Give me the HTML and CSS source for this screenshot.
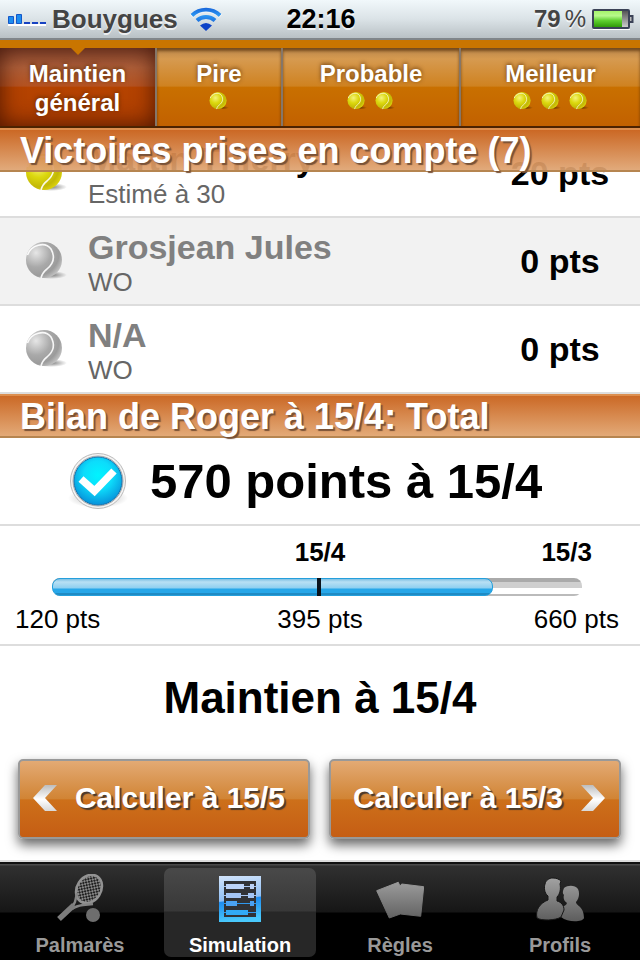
FILE: index.html
```html
<!DOCTYPE html>
<html lang="fr">
<head>
<meta charset="utf-8">
<meta name="viewport" content="width=device-width, initial-scale=1">
<title>Simulation</title>
<link rel="stylesheet" href="styles.css">
</head>
<body>
<svg class="defs" aria-hidden="true">
  <defs>
    <radialGradient id="yellow" cx="35%" cy="35%" r="75%"><stop offset="0" stop-color="#f4f27a"/><stop offset=".4" stop-color="#dcd80e"/><stop offset=".75" stop-color="#c3b806"/><stop offset="1" stop-color="#e2da10"/></radialGradient>
    <radialGradient id="silver" cx="28%" cy="30%" r="80%"><stop offset="0" stop-color="#e6e6e6"/><stop offset=".5" stop-color="#a9a9a9"/><stop offset=".8" stop-color="#9b9b9b"/><stop offset="1" stop-color="#c4c4c4"/></radialGradient>
    <radialGradient id="shade"><stop offset="0" stop-color="#000" stop-opacity=".5"/><stop offset="1" stop-color="#000" stop-opacity="0"/></radialGradient>
    <radialGradient id="cyan" cx="50%" cy="38%" r="60%"><stop offset="0" stop-color="#00f4ff"/><stop offset=".5" stop-color="#0ddcfb"/><stop offset="1" stop-color="#0796dc"/></radialGradient>
    <linearGradient id="icon" gradientUnits="userSpaceOnUse" x1="0" y1="4" x2="0" y2="46"><stop offset="0" stop-color="#a2a2a2"/><stop offset="1" stop-color="#5f5f5f"/></linearGradient>
    <linearGradient id="wifi" gradientUnits="userSpaceOnUse" x1="0" y1="0" x2="0" y2="24"><stop offset="0" stop-color="#1560d8"/><stop offset=".35" stop-color="#2b96f2"/><stop offset="1" stop-color="#0a3fc4"/></linearGradient>
    <linearGradient id="cell" x2="0" y2="1"><stop offset="0" stop-color="#a6f56a"/><stop offset=".3" stop-color="#b8f98c"/><stop offset=".6" stop-color="#5ecf2f"/><stop offset="1" stop-color="#2f9a08"/></linearGradient>
    <linearGradient id="empty" x2="0" y2="1"><stop offset="0" stop-color="#555"/><stop offset="1" stop-color="#ccc"/></linearGradient>
    <linearGradient id="chevron" x2="0" y2="1"><stop offset="0" stop-color="#bdbdbd"/><stop offset=".55" stop-color="#fff"/><stop offset="1" stop-color="#d8d8d8"/></linearGradient>
    <linearGradient id="frame" gradientUnits="userSpaceOnUse" x1="0" y1="0" x2="6" y2="46"><stop offset="0" stop-color="#d2e4fb"/><stop offset=".54" stop-color="#8fbff5"/><stop offset=".57" stop-color="#1f8df0"/><stop offset="1" stop-color="#49c8fb"/></linearGradient>
    <pattern id="mesh" width="4" height="4" patternUnits="userSpaceOnUse"><rect width="4" height="4" fill="#888"/><rect width="2" height="2" fill="#222"/><rect x="2" y="2" width="2" height="2" fill="#222"/></pattern>
    <symbol id="ball" viewBox="0 0 42 40">
      <ellipse cx="26" cy="34" rx="16" ry="4" fill="url(#shade)"/>
      <circle cx="19" cy="19" r="18"/>
      <path d="M2.500 14C6 4 20 0 26 8C31 17 28 23 22 28C18 31 17 33 16 37" fill="none" stroke="#fff" stroke-width="1.600" stroke-opacity=".9"/>
    </symbol>
  </defs>
</svg>

<header class="status">
  <div class="status-left">
    <svg width="38" height="14" viewBox="0 0 38 14" aria-hidden="true"><path d="M0 13h38" stroke="#fff" stroke-width="2"/><path d="M.5 4.500h5v7h-5zM8.500 2.500h5v9h-5z" fill="#1c8df0" stroke="#1556c8"/><path d="M16 11h6M24 11h6M32 11h6" stroke="#1743c2" stroke-width="2"/></svg>
    <span class="carrier">Bouygues</span>
    <svg class="wifi" width="32" height="25" viewBox="0 0 32 25" aria-hidden="true"><g fill="none" stroke="url(#wifi)" stroke-width="4"><path d="M2 8.500A20 20 0 0 1 30 8.500"/><path d="M7 13.500A13 13 0 0 1 25 13.500" /></g><path d="M10 18.500Q16 13.500 22 18.500L16 24z" fill="#0d43c8"/><path d="M0 7L3 10.500A18 18 0 0 1 29 10.500L32 7" fill="none" stroke="#fff" stroke-width=".6"/></svg>
  </div>
  <time class="clock">22:16</time>
  <div class="status-right">
    <span class="charge"><span>79</span><span class="percent">%</span></span>
    <svg width="42" height="21" viewBox="0 0 42 21" aria-hidden="true"><path d="M1 20.500h37" stroke="#fff"/><rect x="1" y="1" width="36" height="18" rx="1" fill="#fff" stroke="#3b4257" stroke-width="2"/><rect x="2" y="2" width="28" height="16" fill="url(#cell)"/><rect x="30" y="2" width="6" height="16" fill="url(#empty)"/><path d="M38 7h2.500v6H38" fill="#bbb" stroke="#3b4257" stroke-width="2"/></svg>
  </div>
</header>

<nav class="tabs" aria-label="Scénario">
  <button class="tab tab-active" type="button"><span>Maintien<br>général</span></button>
  <button class="tab" type="button">Pire<span class="balls"><svg class="ball-s"><use href="#ball"/></svg></span></button>
  <button class="tab" type="button">Probable<span class="balls"><svg class="ball-s"><use href="#ball"/></svg><svg class="ball-s"><use href="#ball"/></svg></span></button>
  <button class="tab" type="button">Meilleur<span class="balls"><svg class="ball-s"><use href="#ball"/></svg><svg class="ball-s"><use href="#ball"/></svg><svg class="ball-s"><use href="#ball"/></svg></span></button>
</nav>

<main>
  <section>
    <h2 class="heading heading-over">Victoires prises en compte (7)</h2>
    <ul class="wins">
      <li class="win">
        <svg class="ball"><use href="#ball"/></svg>
        <div class="player"><strong class="name">Martin Thierry</strong><span class="note">Estimé à 30</span></div>
        <b class="points">20 pts</b>
      </li>
      <li class="win win-alt win-wo">
        <svg class="ball"><use href="#ball"/></svg>
        <div class="player"><strong class="name">Grosjean Jules</strong><span class="note">WO</span></div>
        <b class="points">0 pts</b>
      </li>
      <li class="win win-wo">
        <svg class="ball"><use href="#ball"/></svg>
        <div class="player"><strong class="name">N/A</strong><span class="note">WO</span></div>
        <b class="points">0 pts</b>
      </li>
    </ul>
  </section>

  <section>
    <h2 class="heading">Bilan de Roger à 15/4: Total</h2>
    <p class="total">
      <svg width="60" height="58" viewBox="0 0 60 58" aria-hidden="true"><ellipse cx="30" cy="46" rx="30" ry="10" fill="url(#shade)" opacity=".6"/><circle cx="30" cy="29" r="27.500" fill="#f4f4f4" stroke="#bbb"/><circle cx="30" cy="29" r="25" fill="none" stroke="#aaa"/><circle cx="30" cy="29" r="24" fill="url(#cyan)" stroke="#1573ad"/><path d="M13 27L26.500 39L46 19" fill="none" stroke="#fff" stroke-width="7.500"/></svg>
      <span>570 points à 15/4</span>
    </p>
    <div class="scale">
      <div class="ranks"><span></span><b>15/4</b><b class="rank-next">15/3</b></div>
      <div class="track" role="meter" aria-label="Points" aria-valuemin="120" aria-valuemax="660" aria-valuenow="570"><div class="fill" style="width:83.3%"></div><i class="mark"></i></div>
      <div class="limits"><span>120 pts</span><span>395 pts</span><span>660 pts</span></div>
    </div>
    <p class="verdict">Maintien à 15/4</p>
    <div class="actions">
      <button class="action" type="button"><svg width="24" height="26" viewBox="0 0 24 26" aria-hidden="true"><path d="M0 13L12 0H24L12 13L24 26H12Z" fill="url(#chevron)"/></svg>Calculer à 15/5</button>
      <button class="action action-next" type="button">Calculer à 15/3<svg width="24" height="26" viewBox="0 0 24 26" aria-hidden="true"><path d="M24 13L12 0H0L12 13L0 26H12Z" fill="url(#chevron)"/></svg></button>
    </div>
  </section>
</main>

<nav class="bar" aria-label="Navigation">
  <a class="item" href="#palmares">
    <svg viewBox="0 0 48 48" aria-hidden="true"><g transform="rotate(33 33 15)"><ellipse cx="33" cy="15" rx="12" ry="15" fill="url(#mesh)" stroke="#929292" stroke-width="2.500"/></g><path d="M21 19L19 28Q18 31 15 33M37 30L27 31Q20 32 16 35" fill="none" stroke="#858585" stroke-width="2.400"/><path d="M3 45L18 31" stroke="#7d7d7d" stroke-width="5.500"/><circle cx="37" cy="41" r="7" fill="#6e6e6e"/></svg>
    <span>Palmarès</span>
  </a>
  <a class="item item-active" href="#simulation" aria-current="page">
    <svg viewBox="0 0 48 48" aria-hidden="true"><g transform="translate(3 2)"><path d="M0 0H42V46H0Z" fill="url(#frame)"/><path d="M5 5H37V41H5Z" fill="#303236"/><path d="M5 10.500h32M5 19.500h32" stroke="#a9c6f2"/><path d="M5 27.500h32M5 36.500h32" stroke="#2f98ee"/><path d="M7 8h18v5H7zM31 8h4v5h-4z" fill="#bcd3f8"/><path d="M7 17h15v5H7zM29 17h6v5h-6z" fill="#a3c5f5"/><path d="M7 25h11v5H7zM31 25h4v5h-4z" fill="#4aa2f3"/><path d="M7 34h22v5H7z" fill="#31aaf6"/></g></svg>
    <span>Simulation</span>
  </a>
  <a class="item" href="#regles">
    <svg viewBox="0 0 48 48" aria-hidden="true"><path d="M.7 16.700L22.300 8.300L24 12.300L25.700 10L47.700 12.700L44.700 42.300L24.300 40L13.300 44Z" fill="url(#icon)" stroke="url(#icon)" stroke-linejoin="round"/></svg>
    <span>Règles</span>
  </a>
  <a class="item" href="#profils">
    <svg viewBox="0 0 48 48" aria-hidden="true"><path d="M28 14C32 11 39 11 42 15C44 19 43 25 40 28C40 32 48 32 48 44C47 48 32 49 25 43L25 33Q30 32 31 29C28 27 27 24 28 21C26 19 27 17 28 14Z" fill="url(#icon)"/><path d="M17 4C20 4 23 5 25 7L24 10C25 15 24 20 21 23V27C25 28 28 31 28 36L25 43C20 46.500 5 47 1 44C-1 36 4 29 12 26V22C8 19 8 13 9 10C10 6 13 4 17 4Z" fill="url(#icon)" stroke="#161616"/></svg>
    <span>Profils</span>
  </a>
</nav>
</body>
</html>
```
FILE: styles.css
```css
* { box-sizing: border-box; }

body {
  margin: 0;
  min-height: 100vh;
  display: flex;
  flex-direction: column;
  background: #fff;
  color: #000;
  font-family: "Liberation Sans", Arial, sans-serif;
  font-size: 26px;
}

h2, p, ul { margin: 0; padding: 0; }
ul { list-style: none; }
button { font: inherit; cursor: pointer; }
svg { flex: none; }

.defs { position: absolute; width: 0; height: 0; }

.status {
  display: grid;
  grid-template-columns: 1fr auto 1fr;
  align-items: center;
  height: 40px;
  padding: 0 6px 0 8px;
  background: linear-gradient(#f1f8fb, #dbe3e7 50%, #b9c1c5);
  border-bottom: 2px solid #80868a;
  font-weight: bold;
  text-shadow: 0 2px 0 rgba(255, 255, 255, .7);
}
.status-left { display: flex; align-items: center; gap: 6px; color: #444; }
.wifi { margin-left: 6px; }
.clock { font-size: 27px; }
.status-right { display: flex; align-items: center; justify-content: flex-end; gap: 6px; color: #444; }
.charge { display: flex; gap: 4px; font-size: 24px; }
.percent { font-weight: normal; }

.tabs {
  display: grid;
  grid-template-columns: 157fr 126fr 178fr 179fr;
  padding-top: 8px;
  background: #c97500;
  border-bottom: 2px solid #4c2200;
}
.tab {
  display: flex;
  flex-direction: column;
  align-items: center;
  justify-content: flex-start;
  height: 78px;
  padding: 11px 0 0;
  border: 0;
  border-right: 2px solid #857668;
  background: linear-gradient(#b8854a, #d69a50 14%, #cf8220 49%, #c97000 50%, #c26100);
  box-shadow: inset 0 3px 3px rgba(70, 35, 0, .6);
  color: #fff;
  font-size: 24px;
  font-weight: bold;
  line-height: 29px;
  text-shadow: 0 -1px 4px rgba(80, 40, 0, .8);
}
.tab:last-child { border-right: 0; }
.tab-active {
  position: relative;
  background: linear-gradient(#8e4c32, #ad5e38 25%, #b55220 49%, #b54300 50%, #ae3e00);
  box-shadow: inset 0 0 22px rgba(50, 10, 0, .8);
  text-align: center;
}
.tab-active::before {
  content: "";
  position: absolute;
  top: -1px;
  left: 50%;
  border: 8px solid transparent;
  border-top-color: #c97500;
  border-bottom: 0;
  transform: translateX(-50%);
}
.balls { display: flex; gap: 8px; padding-top: 3px; }
.ball-s { width: 20px; height: 20px; fill: url(#yellow); }

main { flex: 1; }

.heading {
  height: 44px;
  padding-left: 20px;
  border-top: 2px solid #dc8e4e;
  border-bottom: 2px solid #b68550;
  background: linear-gradient(#cb6926, #e3aa78);
  color: #fff;
  font-size: 36px;
  line-height: 42px;
  text-shadow: 2px 2px 1px #795237;
}
.heading-over {
  position: relative;
  z-index: 1;
  margin-bottom: -42px;
  background: linear-gradient(rgba(202, 101, 32, .98), rgba(223, 163, 112, .92));
}

.win {
  display: grid;
  grid-template-columns: 63px 1fr 160px;
  align-items: center;
  height: 88px;
  padding-left: 25px;
  border-bottom: 2px solid #ddd;
}
.win-alt { background: #f2f2f2; }
.ball { width: 42px; height: 40px; fill: url(#yellow); }
.win-wo .ball { fill: url(#silver); }
.player { display: flex; flex-direction: column; padding-top: 3px; }
.name { font-size: 34px; line-height: 38px; }
.win-wo .name { color: #808080; }
.note { line-height: 32px; color: #666; }
.points { font-size: 34px; text-align: center; }

.total {
  display: flex;
  align-items: center;
  gap: 22px;
  height: 88px;
  padding-left: 68px;
  border-bottom: 2px solid #ddd;
  font-size: 49px;
  font-weight: bold;
}

.scale { padding: 11px 15px 10px; border-bottom: 2px solid #ddd; }
.ranks, .limits {
  display: grid;
  grid-template-columns: 1fr 1fr 1fr;
  line-height: 30px;
  text-align: center;
}
.rank-next { text-align: right; padding-right: 33px; }
.limits span:first-child { text-align: left; }
.limits span:last-child { text-align: right; padding-right: 6px; }
.track {
  position: relative;
  height: 18px;
  margin: 11px 43px 8px 37px;
  border-radius: 8px;
  background: linear-gradient(#aaa 4px, #cfcfcf 4px 10px, #fff 10px 16px, #bbb 16px);
}
.fill {
  height: 18px;
  border: 1px solid #249fdc;
  border-radius: 8px;
  background: linear-gradient(#7fc0e3, #b8e0f4 3px, #8ecff0 9px, #27a7e9 10px 14px, #176f9f 15px, #27a7e9);
}
.mark { position: absolute; top: 0; left: 50%; width: 4px; height: 18px; background: #0b141c; }

.verdict {
  padding: 26px 0 36px;
  font-size: 44px;
  font-weight: bold;
  line-height: 51px;
  text-align: center;
}

.actions { display: grid; grid-template-columns: 1fr 1fr; gap: 19px; padding: 0 19px 21px 18px; }
.action {
  display: flex;
  align-items: center;
  justify-content: center;
  gap: 18px;
  height: 80px;
  padding: 0 10px 2px 0;
  border: 2px solid #999;
  border-radius: 5px;
  background: linear-gradient(#e3aa74, #d18434 50%, #cd701a 51%, #c55d14);
  box-shadow: 0 6px 12px rgba(0, 0, 0, .6);
  color: #fff;
  font-size: 30px;
  font-weight: bold;
  text-shadow: 2px 2px 1px #4b3a2c;
}
.action-next { padding: 0 0 2px 8px; }

.bar {
  display: grid;
  grid-template-columns: repeat(4, 1fr);
  height: 100px;
  padding: 4px 0;
  border-top: 2px solid #ddd;
  background: linear-gradient(#111 2px, #4a4a4a 2px 3px, #303030 4px, #161616 50px, #000 51px);
}
.item {
  display: flex;
  flex-direction: column;
  align-items: center;
  margin: 2px 4px 0;
  padding-top: 6px;
  border-radius: 7px;
  color: #999;
  font-size: 20px;
  font-weight: bold;
  line-height: 24px;
  text-decoration: none;
}
.item svg { width: 48px; height: 48px; margin-bottom: 11px; }
.item-active {
  background: linear-gradient(#494949, #383838 43px, #272727 44px);
  color: #fff;
}
```
